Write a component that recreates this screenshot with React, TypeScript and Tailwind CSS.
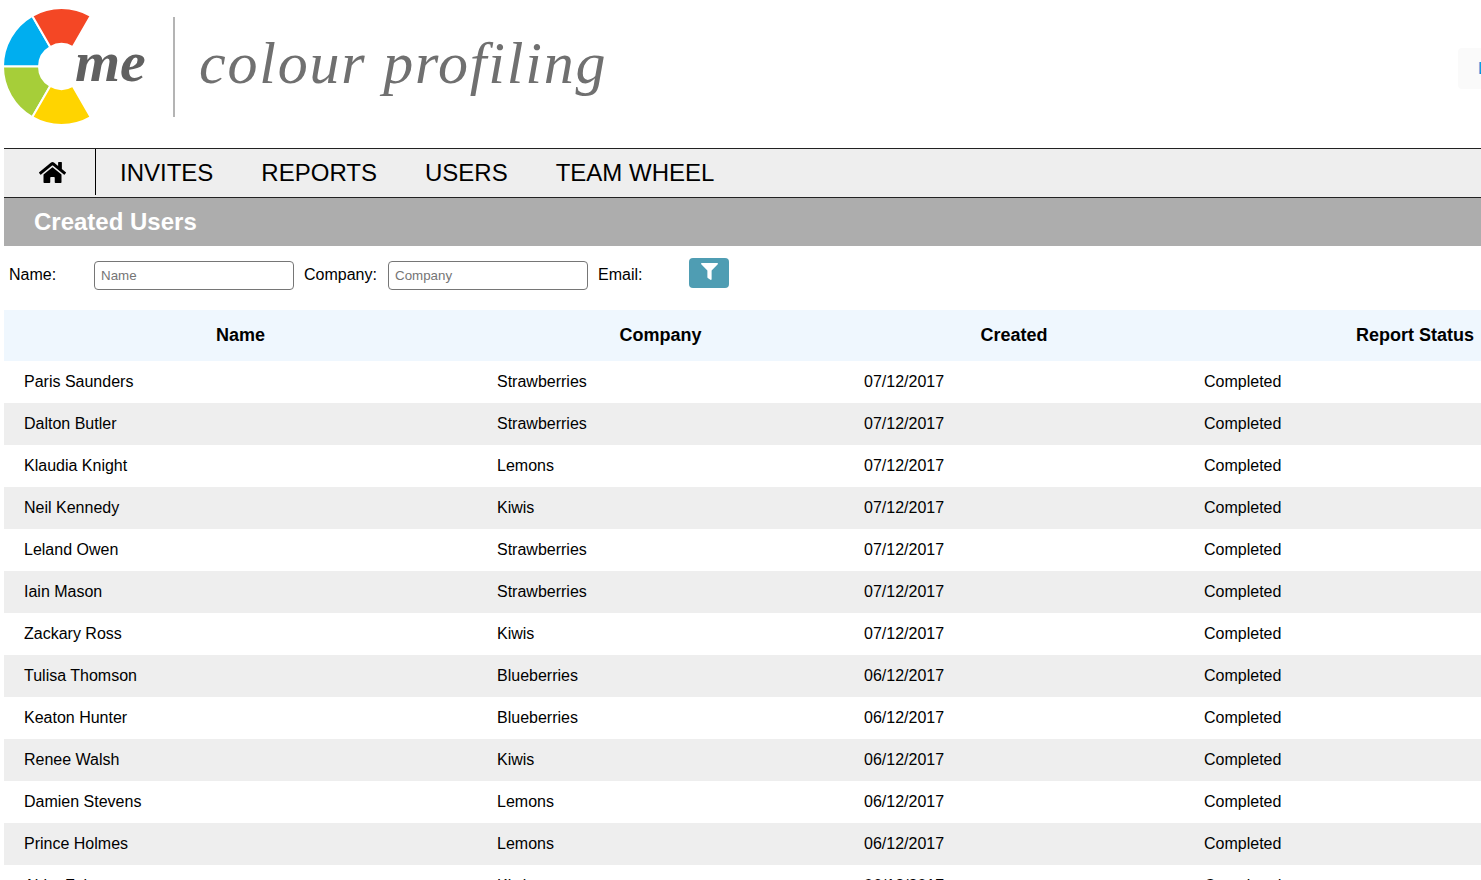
import { FaHome, FaFilter } from "react-icons/fa";

const rows: [string, string, string][] = [
  ["Paris Saunders", "Strawberries", "07/12/2017"],
  ["Dalton Butler", "Strawberries", "07/12/2017"],
  ["Klaudia Knight", "Lemons", "07/12/2017"],
  ["Neil Kennedy", "Kiwis", "07/12/2017"],
  ["Leland Owen", "Strawberries", "07/12/2017"],
  ["Iain Mason", "Strawberries", "07/12/2017"],
  ["Zackary Ross", "Kiwis", "07/12/2017"],
  ["Tulisa Thomson", "Blueberries", "06/12/2017"],
  ["Keaton Hunter", "Blueberries", "06/12/2017"],
  ["Renee Walsh", "Kiwis", "06/12/2017"],
  ["Damien Stevens", "Lemons", "06/12/2017"],
  ["Prince Holmes", "Lemons", "06/12/2017"],
  ["Abby Faber", "Kiwis", "06/12/2017"],
];

const cx = 61.5;
const cy = 66.5;
const R = 58.5;
const r = 22.5;
function sector(a0: number, a1: number) {
  const p = (rad: number, a: number) => {
    const t = (a * Math.PI) / 180;
    return `${(cx + rad * Math.cos(t)).toFixed(2)} ${(cy - rad * Math.sin(t)).toFixed(2)}`;
  };
  return `M${p(R, a0)} A${R} ${R} 0 0 1 ${p(R, a1)} L${p(r, a1)} A${r} ${r} 0 0 0 ${p(r, a0)} Z`;
}

export default function App() {
  return (
    <div className="h-[880px] w-[1481px] overflow-hidden bg-white pl-[4px] font-['Liberation_Sans',Arial,sans-serif] text-base text-black">
      <header className="flex h-[148px] items-start">
        <div className="relative h-[148px] w-[172px] shrink-0 -ml-[4px]">
          <svg width="130" height="134" viewBox="0 0 130 134" className="absolute left-0 top-0">
            <path d={sector(180, 120)} fill="#00aeef" stroke="#fff" strokeWidth="2" />
            <path d={sector(120, 60)} fill="#f44725" stroke="#fff" strokeWidth="2" />
            <path d={sector(240, 180)} fill="#a6ce39" stroke="#fff" strokeWidth="2" />
            <path d={sector(300, 240)} fill="#ffd400" stroke="#fff" strokeWidth="2" />
          </svg>
          <span className="absolute left-[75px] top-[32px] font-['Liberation_Serif',serif] text-[58px] font-bold italic leading-[60px] text-[#606060]">
            me
          </span>
        </div>
        <div className="ml-[1px] mt-[17px] h-[100px] w-[2px] shrink-0 bg-[#b4b4b4]" />
        <div className="ml-[24px] mt-[23px] font-['Liberation_Serif',serif] text-[60px] italic leading-[80px] tracking-[1.8px] text-[#707070]">
          colour profiling
        </div>
        <div className="ml-auto mt-[48px] flex h-[41px] w-[23px] items-center overflow-hidden rounded-l bg-[#fafafa] pl-[20px]">
          <span className="text-[#0090d8]">Logout</span>
        </div>
      </header>

      <nav className="flex h-[50px] items-start border-y border-y-[#222] bg-[#eee]">
        <div className="flex h-[46px] w-[92px] items-center justify-center border-r border-r-black pl-[6px]">
          <FaHome className="text-[27px] text-black" />
        </div>
        <div className="flex h-[48px] items-center gap-[48px] pl-[24px] text-2xl">
          <span>INVITES</span>
          <span>REPORTS</span>
          <span>USERS</span>
          <span>TEAM WHEEL</span>
        </div>
      </nav>

      <div className="flex h-[48px] items-center bg-[#adadad] pl-[30px] text-2xl font-bold text-white">Created Users</div>

      <div className="flex h-[64px] items-start">
        <label className="ml-[5px] mt-[17px] w-[85px]">Name:</label>
        <input
          placeholder="Name"
          className="mt-[15px] h-[29px] w-[200px] rounded-sm border border-[#767676] px-[6px] text-[13.333px] placeholder:text-[#757575]"
        />
        <label className="ml-[10px] mt-[17px] w-[84px]">Company:</label>
        <input
          placeholder="Company"
          className="mt-[15px] h-[29px] w-[200px] rounded-sm border border-[#767676] px-[6px] text-[13.333px] placeholder:text-[#757575]"
        />
        <label className="ml-[10px] mt-[17px] w-[91px]">Email:</label>
        <button className="mt-[12px] flex h-[30px] w-[40px] items-center justify-center rounded bg-[#4f9db3] pb-[3px] text-white">
          <FaFilter className="text-[17px]" />
        </button>
      </div>

      <div className="grid h-[51px] grid-cols-[473px_367px_340px_297px] items-center bg-[#eff7fe] pb-[2px] text-lg font-bold">
        <div className="text-center">Name</div>
        <div className="text-center">Company</div>
        <div className="text-center">Created</div>
        <div className="pr-[7px] text-right">Report Status</div>
      </div>

      {rows.map((row, i) => (
        <div
          key={row[0]}
          className={`grid h-[42px] grid-cols-[473px_367px_340px_297px] items-center ${i % 2 === 1 ? "bg-[#eee]" : "bg-white"}`}
        >
          <div className="pl-[20px]">{row[0]}</div>
          <div className="pl-[20px]">{row[1]}</div>
          <div className="pl-[20px]">{row[2]}</div>
          <div className="pl-[20px]">Completed</div>
        </div>
      ))}
    </div>
  );
}
